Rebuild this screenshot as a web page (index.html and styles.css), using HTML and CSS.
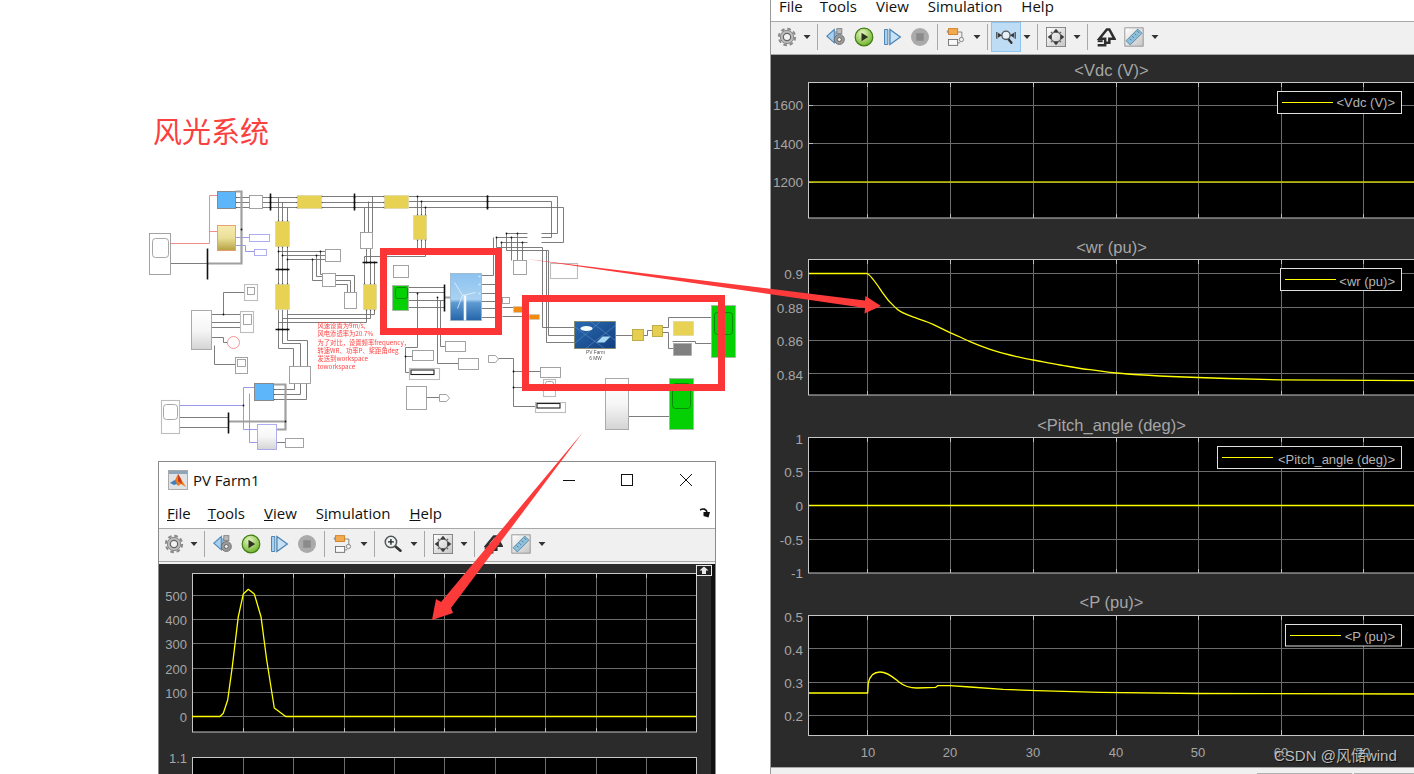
FILE: index.html
```html
<!DOCTYPE html>
<html lang="zh">
<head>
<meta charset="utf-8">
<title>风光系统</title>
<link rel="stylesheet" href="styles.css">
</head>
<body>
<svg class="defs" width="0" height="0" aria-hidden="true">
  <defs>
    <linearGradient id="gYellow" x1="0" y1="0" x2="0" y2="1"><stop offset="0" stop-color="#f6ecb0"/><stop offset=".5" stop-color="#eadf98"/><stop offset="1" stop-color="#b5a040"/></linearGradient>
    <linearGradient id="gGray" x1="0" y1="0" x2="0" y2="1"><stop offset="0" stop-color="#fff"/><stop offset=".5" stop-color="#f6f6f6"/><stop offset="1" stop-color="#d4d4d4"/></linearGradient>
    <linearGradient id="gSky" x1="0" y1="0" x2="0" y2="1"><stop offset="0" stop-color="#8cc2f0"/><stop offset=".55" stop-color="#a9d2f2"/><stop offset=".62" stop-color="#5f9bd2"/><stop offset="1" stop-color="#2464a8"/></linearGradient>
    <linearGradient id="gPv" x1="0" y1="0" x2="1" y2="1"><stop offset="0" stop-color="#2a6ab0"/><stop offset="1" stop-color="#123f80"/></linearGradient>
    <radialGradient id="gPlay" cx=".4" cy=".3" r=".8"><stop offset="0" stop-color="#e6f5c0"/><stop offset="1" stop-color="#62ab1c"/></radialGradient>
    <linearGradient id="gFit" x1="0" y1="0" x2="1" y2="1"><stop offset="0" stop-color="#fff"/><stop offset="1" stop-color="#c4c4c4"/></linearGradient>
    <symbol id="i-gear" viewBox="0 0 24 24"><circle cx="12" cy="12" r="9.8" fill="none" stroke="#8a8a8a" stroke-width="2.4" stroke-dasharray="4.400 3.300"/><circle cx="12" cy="12" r="8" fill="#bdbdbd" stroke="#777"/><circle cx="12" cy="12" r="4.400" fill="#f2f2f2" stroke="#666" stroke-width="1.500"/></symbol>
    <symbol id="i-back" viewBox="0 0 24 24"><path d="M1 11 10 3v16z" fill="#a9cfec" stroke="#4d86b6" stroke-width="1.3"/><path d="M12 5v13" stroke="#7aa8cc" stroke-width="2"/><circle cx="16" cy="15" r="6" fill="#9a9a9a" stroke="#666"/><circle cx="16" cy="15" r="2.4" fill="#eee" stroke="#555"/><rect x="13" y="2" width="6" height="6" fill="#bbb" stroke="#777"/></symbol>
    <symbol id="i-play" viewBox="0 0 24 24"><circle cx="12" cy="12" r="10.6" fill="url(#gPlay)" stroke="#3f7d12" stroke-width="1.4"/><path d="M9 7l8 5-8 5z" fill="#2c3320"/></symbol>
    <symbol id="i-step" viewBox="0 0 24 24"><path d="M3 3h4v18H3z" fill="#a9cfec" stroke="#4d86b6" stroke-width="1.2"/><path d="M9.5 3 22 12 9.500 21z" fill="#c8e1f4" stroke="#4d86b6" stroke-width="1.6"/></symbol>
    <symbol id="i-stop" viewBox="0 0 24 24"><circle cx="12" cy="12" r="10.800" fill="#aaa"/><rect x="7.500" y="7.500" width="9" height="9" fill="#8b8b8b"/></symbol>
    <symbol id="i-block" viewBox="0 0 24 24"><path d="M13 6h6v9h-2M13 19h4" fill="none" stroke="#777"/><rect x="3" y="2" width="11" height="7" fill="#f3a94d" stroke="#c9781b"/><rect x="1" y="4" width="2" height="3" fill="#999"/><rect x="3" y="15" width="11" height="7" fill="#f8f8f8" stroke="#666"/><circle cx="18.500" cy="15" r="2.600" fill="#eee" stroke="#777"/></symbol>
    <symbol id="i-zoom" viewBox="0 0 24 24"><path d="m14 14 7 6" stroke="#333" stroke-width="3.200" stroke-linecap="round"/><circle cx="9.500" cy="9.500" r="6.800" fill="#eef4f6" stroke="#555" stroke-width="1.800"/><path d="M6 9.500h7M9.500 6v7" stroke="#222" stroke-width="1.600"/></symbol>
    <symbol id="i-zoomx" viewBox="0 0 24 24"><path d="m14.500 14 4 5" stroke="#333" stroke-width="2.800" stroke-linecap="round"/><circle cx="12" cy="10" r="5" fill="#e5f0f7" stroke="#555" stroke-width="1.600"/><path d="M1 6v8M23 6v8" stroke="#333" stroke-width="1.400"/><path d="M7 10 2.500 7v6zM17 10l4.500-3v6z" fill="#333"/></symbol>
    <symbol id="i-fit" viewBox="0 0 24 24"><rect x=".5" y=".5" width="23" height="23" fill="url(#gFit)" stroke="#777"/><path d="M12 2l4 5H8zM12 22l4-5H8zM2 12l5-4v8zM22 12l-5-4v8z" fill="#3a3a3a"/><path d="m6 6 2.500 2.500M18 6l-2.500 2.500M6 18l2.500-2.500M18 18l-2.500-2.500" stroke="#666" stroke-width="1.800"/></symbol>
    <symbol id="i-cursor" viewBox="0 0 24 24"><path d="M2 22h9v-8H4l9-11h3l6 11h-6v5h-5" fill="none" stroke="#2e2e2e" stroke-width="3"/><path d="M2 17h6" stroke="#2e2e2e" stroke-width="2.400"/></symbol>
    <symbol id="i-ruler" viewBox="0 0 24 24"><rect x="1" y="1" width="22" height="22" fill="url(#gFit)" stroke="#8a8a8a"/><path d="M2.500 16.500 16.500 2.500l5 5-14 14z" fill="#8fc0dc" stroke="#4d7f9e"/><path d="m7 14 2 2M10 11l2 2M13 8l2 2M16 5l2 2" stroke="#3e6a86"/></symbol>
  </defs>
</svg>

<main class="desk">
  <h1 class="slide-title">风光系统</h1>

  <svg class="diagram" viewBox="139.500 179.500 620 280" width="620" height="280">
    <!-- wires -->
    <path class="wire" d="M235 197H297M235 202H297M235 207H297M321 196H384M321 202H384M321 207H384M408 196H557V233H541M408 201H551V237H541M408 207H563V242H541M278 197V221M282 202V221M287 207V221M278 246V284M282 246V284M287 246V284M278 309V329M282 309V329M287 309V329M417 196V215M421 201V215M425 207V215M417 239V249M421 239V249M425 239V256H364V284M364 207V232M368 201V232M372 196V232M366 248V262M370 248V262M374 262V284M370 262V284M278 251H325M282 255H325M287 259H325M312 259V280H322M316 255V276H322M320 251V274H322M335 275H354V292M335 280H350V292M335 284H347V292M287 314H374V309M282 318H370V309M278 322H366V309M278 329V348H293V366M282 329V343H300V366M287 329V340H307V366M273 389H294V383M273 394H300V383M273 399H306V383M211 314H240M211 322H240M211 327H240M223 314V292H244M211 337H223V342H227M214 345V364H235M170 263H207M179 417H228M179 427H228M408 287H444M408 292H444M408 300H444M408 307H444M417 293V347H405V372H409M405 356H412M437 297V363H458M440 300V346H445M426 397H439M498 358H513V406H535M513 371H540M513 387H543M481 275H493V237M527 233H506V250M527 237H496V247M527 242H501V247M496 247H542M506 250H548M511 237V260M517 233V260M522 242V260M542 247V327H574M548 250V335H574M546 250V342H574M481 284H495M481 293H495M481 301H495M481 308H495M481 317H495M495 300H509M502 307H513M502 316H529M615 335H632M643 335H647V330H652M662 327H668V317H711M662 332H668V348H673M672 341H695V343H711M628 416H669M276 442H285"/>
    <path class="wire-red" d="M170 243H209V195H217M209 231H217"/>
    <path class="wire-blue" d="M235 237H249M235 245H245V251H254M179 405H243V387H254M243 405V429H257M249 393V442H257"/>
    <path class="bus-gray" d="M444 297H450M207 263H241V191H235M228 421H285M273 384H285V429H276"/>
    <path class="bus" d="M207 248V279M228 412V433M444 284V311M270 193V210M354 193V210M487 195V209M275 269H289M275 329H289M362 262H377"/>
    <path class="dots" d="M270 197h0M270 202h0M270 207h0M354 197h0M354 202h0M354 207h0M487 196h0M487 201h0M487 207h0M278 269h0M282 269h0M287 269h0M278 329h0M282 329h0M287 329h0M366 262h0M370 262h0M374 262h0M241 229h0M417 196h0M421 201h0M425 207h0M417 293h0M437 297h0M405 356h0M513 371h0M513 387h0M506 233h0M517 233h0M511 237h0M496 237h0M522 242h0M501 242h0M223 314h0M243 405h0M285 421h0M312 259h0M316 255h0M320 251h0M278 251h0M282 255h0M287 259h0M235 197h0M235 202h0M235 207h0M297 197h0M297 202h0M297 207h0M321 196h0M321 202h0M321 207h0M384 196h0M384 202h0M384 207h0M278 221h0M282 221h0M287 221h0M278 246h0M282 246h0M287 246h0M278 284h0M282 284h0M287 284h0M364 284h0M370 284h0M374 284h0M366 309h0M370 309h0M374 309h0M417 215h0M421 215h0M425 215h0M417 239h0M421 239h0M425 239h0M273 389h0M273 394h0M273 399h0"/>

    <!-- blocks -->
    <rect class="b-blue" x="217" y="191" width="18" height="17"/>
    <rect class="b-gold" x="217" y="225" width="18" height="25"/>
    <rect class="b" x="149" y="233" width="21" height="41"/><rect class="b-in" x="152" y="238" width="16" height="19" rx="3"/>
    <rect class="b" x="249" y="195" width="13" height="13"/>
    <rect class="b-y" x="297" y="195" width="24" height="13"/>
    <rect class="b-y" x="384" y="195" width="24" height="13"/>
    <rect class="b-y" x="275" y="221" width="14" height="25"/>
    <rect class="b-y" x="413" y="215" width="13" height="24"/>
    <rect class="b-y" x="275" y="284" width="14" height="25"/>
    <rect class="b-y" x="363" y="284" width="13" height="25"/>
    <rect class="b-outline" x="249" y="234" width="20" height="7"/>
    <rect class="b-outline" x="254" y="249" width="12" height="6"/>
    <rect class="b" x="360" y="232" width="12" height="16"/>
    <rect class="b" x="325" y="249" width="15" height="12"/>
    <rect class="b" x="322" y="273" width="13" height="13"/>
    <rect class="b" x="344" y="292" width="12" height="16"/>
    <rect class="b-soft" x="244" y="284" width="13" height="16"/><rect class="b-in" x="247" y="287" width="7" height="7"/>
    <rect class="b-grad" x="191" y="310" width="20" height="39"/>
    <rect class="b-soft" x="240" y="311" width="13" height="21"/><rect class="b-in" x="243" y="314" width="8" height="10"/>
    <circle class="b-ring" cx="233" cy="342" r="6"/>
    <rect class="b" x="235" y="357" width="12" height="16"/><rect class="b-in" x="237" y="359" width="8" height="7"/>
    <rect class="b" x="289" y="366" width="21" height="17"/>
    <rect class="b-blue" x="254" y="383" width="19" height="17"/>
    <rect class="b-soft" x="161" y="400" width="18" height="33"/><rect class="b-in" x="163" y="404" width="14" height="15" rx="3"/>
    <rect class="b-grad-blue" x="257" y="424" width="19" height="25"/>
    <rect class="b" x="285" y="438" width="18" height="9"/>

    <rect class="b" x="393" y="265" width="15" height="12"/>
    <rect class="b-green" x="392" y="285" width="16" height="25"/><rect class="b-in-green" x="395" y="287" width="12" height="11" rx="2"/>
    <rect class="b-sky" x="450" y="273" width="31" height="47"/>
    <path class="blade" d="M462 295 454 282M462 295 475 292M462 295 457 308"/>
    <path class="tower" d="M464.500 295V320"/>
    <path class="port" d="M478 276h2M478 284h2M478 293h2"/>
    <rect class="b" x="502" y="297" width="7" height="6"/>
    <rect class="b" x="513" y="260" width="13" height="14"/>
    <rect class="b-soft" x="550" y="263" width="27" height="15"/>
    <rect class="b-orange" x="513" y="306" width="10" height="6"/>
    <rect class="b-orange" x="529" y="314" width="10" height="5"/>
    <rect class="b" x="445" y="341" width="20" height="10"/>
    <rect class="b" x="458" y="358" width="20" height="11"/>
    <rect class="b" x="412" y="350" width="21" height="10"/>
    <rect class="b-soft" x="409" y="368" width="30" height="11"/><rect class="b-scope" x="410.500" y="369.500" width="23" height="4.500"/>
    <rect class="b" x="406" y="386" width="20" height="23"/>
    <path class="b" d="M439 394h7l3 3.500-3 3.500h-7z"/>
    <path class="b" d="M488 355h7l3 3.500-3 3.500h-7z"/>
    <rect class="b" x="540" y="367" width="20" height="10"/>
    <rect class="b-soft" x="543" y="379" width="12" height="17"/><rect class="b-in" x="545" y="381" width="8" height="7" rx="2"/>
    <rect class="b-soft" x="535" y="402" width="30" height="10"/><rect class="b-scope" x="536.500" y="403" width="23" height="4.500"/>
    <rect class="b-pv" x="574" y="321" width="41" height="27"/>
    <path class="pv-lines" d="M574 343 600 321M585 348 615 325M590 321 615 340M574 326 604 348"/>
    <ellipse class="pv-sun" cx="586" cy="328" rx="6" ry="2.500"/>
    <path class="pv-panel" d="M596 342 602 336H610L604 342z"/>
    <text class="pv-label" x="595" y="353">PV Farm</text>
    <text class="pv-label" x="595" y="359">6 MW</text>
    <rect class="b-y2" x="632" y="329" width="11" height="11"/>
    <rect class="b-y2" x="652" y="325" width="10" height="11"/>
    <rect class="b-y" x="673" y="321" width="20" height="14"/>
    <rect class="b-dark" x="673" y="343" width="18" height="12"/>
    <rect class="b-green" x="711" y="305" width="24" height="52"/><rect class="b-in-green" x="714" y="312" width="18" height="22" rx="3"/>
    <rect class="b-grad" x="605" y="378" width="23" height="51"/>
    <rect class="b-green" x="669" y="378" width="24" height="51"/><rect class="b-in-green" x="672" y="383" width="18" height="25" rx="3"/>

    <text class="note" x="317" y="327">风速设置为9m/s,</text>
    <text class="note" x="317" y="335">风电渗透率为20.7%</text>
    <text class="note" x="317" y="344">为了对比，设置频率frequency，</text>
    <text class="note" x="317" y="352">转速WR、功率P、桨距角deg</text>
    <text class="note" x="317" y="360">发送到workspace</text>
    <text class="note" x="317" y="368">toworkspace</text>
  </svg>

  <div class="callout callout-wind"></div>
  <div class="callout callout-pv"></div>

  <section class="window farm-win">
    <header class="titlebar">
      <svg class="app-icon" viewBox="0 0 20 20" width="20" height="20"><rect x=".5" y=".5" width="19" height="19" fill="#dfe3e6" stroke="#aaa"/><rect x="1" y="1" width="18" height="3" fill="#8ea4b8"/><path d="M2 13 7 10 10 4l3 5 5 8-5-3-3 2-3-4z" fill="#ee7c1e"/><path d="M2 13 7 10l2 4-3 1z" fill="#3f7fc0"/><path d="M10 4l3 5 1 5-4-3z" fill="#c8391c"/></svg>
      <span class="win-title">PV Farm1</span>
      <div class="win-buttons">
        <svg class="win-btn" viewBox="0 0 12 12" width="12" height="12"><path d="M0 6.500h12"/></svg>
        <svg class="win-btn" viewBox="0 0 12 12" width="12" height="12"><rect x=".5" y=".5" width="11" height="11"/></svg>
        <svg class="win-btn win-close" viewBox="0 0 12 12" width="12" height="12"><path d="m0 0 12 12M12 0 0 12"/></svg>
      </div>
    </header>
    <nav class="menubar">
      <span class="menu-first"><u>F</u>ile</span><span><u>T</u>ools</span><span><u>V</u>iew</span><span>S<u>i</u>mulation</span><span><u>H</u>elp</span>
      <svg class="dock" viewBox="0 0 10 10" width="10" height="10"><path d="M0 2C3 0 6 1 7 4" fill="none" stroke="#111" stroke-width="1.600"/><path d="M3.500 4H10L8.500 9.500 3.500 8z" fill="#111"/></svg>
    </nav>
    <div class="toolbar">
      <svg class="tool"><use href="#i-gear" x="5" y="4" width="20" height="20"/></svg><i class="caret"></i><i class="sep"></i>
      <svg class="tool"><use href="#i-back" x="4" y="4" width="20" height="20"/></svg>
      <svg class="tool"><use href="#i-play" x="4" y="4" width="20" height="20"/></svg>
      <svg class="tool"><use href="#i-step" x="4" y="4" width="20" height="20"/></svg>
      <svg class="tool"><use href="#i-stop" x="4" y="4" width="20" height="20"/></svg><i class="sep"></i>
      <svg class="tool"><use href="#i-block" x="4" y="4" width="20" height="20"/></svg><i class="caret"></i><i class="sep"></i>
      <svg class="tool"><use href="#i-zoom" x="4" y="4" width="20" height="20"/></svg><i class="caret"></i><i class="sep"></i>
      <svg class="tool"><use href="#i-fit" x="4" y="4" width="20" height="20"/></svg><i class="caret"></i><i class="sep"></i>
      <svg class="tool"><use href="#i-cursor" x="4" y="4" width="20" height="20"/></svg>
      <svg class="tool"><use href="#i-ruler" x="4" y="4" width="20" height="20"/></svg><i class="caret"></i>
    </div>
    <div class="scope-body">
      <svg class="plot" viewBox="159 564 556 210" width="556" height="210">
        <rect class="well" x="711" y="564" width="4" height="210"/>
        <rect class="axes" x="192.500" y="573.500" width="504" height="158.500"/>
        <path class="grid" d="M243.500 574V732M293.500 574V732M344.500 574V732M394.500 574V732M444.500 574V732M495.500 574V732M545.500 574V732M596.500 574V732M646.500 574V732M193 595.500H696M193 619.500H696M193 643.500H696M193 668.500H696M193 692.500H696M193 716.500H696"/>
        <path class="tick" d="M243.500 574v4M293.500 574v4M344.500 574v4M394.500 574v4M444.500 574v4M495.500 574v4M545.500 574v4M596.500 574v4M646.500 574v4M243.500 732v-4M293.500 732v-4M344.500 732v-4M394.500 732v-4M444.500 732v-4M495.500 732v-4M545.500 732v-4M596.500 732v-4M646.500 732v-4"/>
        <path class="trace" d="M192 716.500H220L223.300 713.300 227.700 700 232.300 666.700 238.300 616.700 243.300 594 248.300 589.300 254.300 594 261 616.700 266.700 660 274.300 708 285.700 716.500H696"/>
        <g class="ylabels-sm">
          <text x="187" y="601">500</text><text x="187" y="625">400</text><text x="187" y="649">300</text><text x="187" y="674">200</text><text x="187" y="698">100</text><text x="187" y="722">0</text><text x="187" y="763">1.1</text>
        </g>
        <rect class="axes" x="192.500" y="757.500" width="504" height="40"/>
        <path class="grid" d="M243.500 758V774M293.500 758V774M344.500 758V774M394.500 758V774M444.500 758V774M495.500 758V774M545.500 758V774M596.500 758V774M646.500 758V774"/>
        <rect class="restore" x="696.500" y="565.500" width="15" height="10"/>
        <path class="restore-arrow" d="M704 566.500l4.500 4h-2.500v3.500h-4v-3.500h-2.500z"/>
      </svg>
    </div>
  </section>

  <section class="window scope-win">
    <nav class="menubar menubar-cut">
      <span class="menu-first">File</span><span>Tools</span><span>View</span><span>Simulation</span><span>Help</span>
    </nav>
    <div class="toolbar">
      <svg class="tool"><use href="#i-gear" x="5" y="4" width="20" height="20"/></svg><i class="caret"></i><i class="sep"></i>
      <svg class="tool"><use href="#i-back" x="4" y="4" width="20" height="20"/></svg>
      <svg class="tool"><use href="#i-play" x="4" y="4" width="20" height="20"/></svg>
      <svg class="tool"><use href="#i-step" x="4" y="4" width="20" height="20"/></svg>
      <svg class="tool"><use href="#i-stop" x="4" y="4" width="20" height="20"/></svg><i class="sep"></i>
      <svg class="tool"><use href="#i-block" x="4" y="4" width="20" height="20"/></svg><i class="caret"></i><i class="sep"></i>
      <svg class="tool tool-active"><use href="#i-zoomx" x="4" y="4" width="20" height="20"/></svg><i class="caret"></i><i class="sep"></i>
      <svg class="tool"><use href="#i-fit" x="4" y="4" width="20" height="20"/></svg><i class="caret"></i><i class="sep"></i>
      <svg class="tool"><use href="#i-cursor" x="4" y="4" width="20" height="20"/></svg>
      <svg class="tool"><use href="#i-ruler" x="4" y="4" width="20" height="20"/></svg><i class="caret"></i>
    </div>
    <div class="scope-body scope-stack">
      <svg class="plot" viewBox="771 55 643 178" width="643" height="178">
        <text class="plot-title" x="1111.500" y="76">&lt;Vdc (V)&gt;</text>
        <rect class="axes" x="808.500" y="82.500" width="620" height="135.500"/>
        <path class="grid" d="M867.500 83V218M950.500 83V218M1033.500 83V218M1116.500 83V218M1198.500 83V218M1281.500 83V218M1363.500 83V218M809 105.500H1414M809 143.500H1414M809 182.500H1414"/>
        <path class="tick" d="M867.500 83v4M950.500 83v4M1033.500 83v4M1116.500 83v4M1198.500 83v4M1281.500 83v4M1363.500 83v4M867.500 218v-4M950.500 218v-4M1033.500 218v-4M1116.500 218v-4M1198.500 218v-4M1281.500 218v-4M1363.500 218v-4M809 105.500h4M809 143.500h4M809 182.500h4"/>
        <path class="trace trace-dim" d="M809 182H1414"/>
        <g class="ylabels"><text x="803" y="110">1600</text><text x="803" y="149">1400</text><text x="803" y="187">1200</text></g>
        <rect class="legend" x="1277.500" y="91.500" width="124" height="22"/>
        <path class="legend-line" d="M1282 102.500H1333"/>
        <text class="legend-text" x="1395" y="107">&lt;Vdc (V)&gt;</text>
      </svg>
      <svg class="plot" viewBox="771 233 643 177" width="643" height="177">
        <text class="plot-title" x="1111.500" y="253">&lt;wr (pu)&gt;</text>
        <rect class="axes" x="808.500" y="259.500" width="620" height="135.500"/>
        <path class="grid" d="M867.500 260V395M950.500 260V395M1033.500 260V395M1116.500 260V395M1198.500 260V395M1281.500 260V395M1363.500 260V395M809 273.500H1414M809 307.500H1414M809 340.500H1414M809 373.500H1414"/>
        <path class="tick" d="M867.500 260v4M950.500 260v4M1033.500 260v4M1116.500 260v4M1198.500 260v4M1281.500 260v4M1363.500 260v4M867.500 395v-4M950.500 395v-4M1033.500 395v-4M1116.500 395v-4M1198.500 395v-4M1281.500 395v-4M1363.500 395v-4"/>
        <path class="trace" d="M809 273.500H867C871 275 876 283 883 293.300S893 305 897 309 908 315 917 318.300 926 321 933 324.300L950 332.700C958 336 964 339 970 341.700S983 347 990 349.300 1003 353.400 1010 355 1025 358.600 1033 360 1050 363.400 1060 365 1078 368.300 1090 369.700 1106 372 1116 373 1170 376.500 1198 377.500 1250 379.200 1281 379.800L1414 380.700"/>
        <g class="ylabels"><text x="803" y="279">0.9</text><text x="803" y="313">0.88</text><text x="803" y="346">0.86</text><text x="803" y="380">0.84</text></g>
        <rect class="legend" x="1280.500" y="268.500" width="121" height="22"/>
        <path class="legend-line" d="M1285 279.500H1336"/>
        <text class="legend-text" x="1395" y="286">&lt;wr (pu)&gt;</text>
      </svg>
      <svg class="plot" viewBox="771 410 643 178" width="643" height="178">
        <text class="plot-title" x="1111.500" y="431">&lt;Pitch_angle (deg)&gt;</text>
        <rect class="axes" x="808.500" y="437.500" width="620" height="135.500"/>
        <path class="grid" d="M867.500 438V573M950.500 438V573M1033.500 438V573M1116.500 438V573M1198.500 438V573M1281.500 438V573M1363.500 438V573M809 471.500H1414M809 539.500H1414"/>
        <path class="tick" d="M867.500 438v4M950.500 438v4M1033.500 438v4M1116.500 438v4M1198.500 438v4M1281.500 438v4M1363.500 438v4M867.500 573v-4M950.500 573v-4M1033.500 573v-4M1116.500 573v-4M1198.500 573v-4M1281.500 573v-4M1363.500 573v-4"/>
        <path class="trace" d="M809 505.500H1414"/>
        <g class="ylabels"><text x="803" y="444">1</text><text x="803" y="477">0.5</text><text x="803" y="511">0</text><text x="803" y="545">-0.5</text><text x="803" y="578">-1</text></g>
        <rect class="legend" x="1217.500" y="446.500" width="184" height="22"/>
        <path class="legend-line" d="M1222 457.500H1273"/>
        <text class="legend-text" x="1395" y="464">&lt;Pitch_angle (deg)&gt;</text>
      </svg>
      <svg class="plot" viewBox="771 588 643 179" width="643" height="179">
        <text class="plot-title" x="1111.500" y="608">&lt;P (pu)&gt;</text>
        <rect class="axes" x="808.500" y="615.500" width="620" height="120"/>
        <path class="grid" d="M867.500 616V735M950.500 616V735M1033.500 616V735M1116.500 616V735M1198.500 616V735M1281.500 616V735M1363.500 616V735M809 648.500H1414M809 682.500H1414M809 715.500H1414"/>
        <path class="tick" d="M867.500 616v4M950.500 616v4M1033.500 616v4M1116.500 616v4M1198.500 616v4M1281.500 616v4M1363.500 616v4M867.500 735v-5M950.500 735v-5M1033.500 735v-5M1116.500 735v-5M1198.500 735v-5M1281.500 735v-5M1363.500 735v-5"/>
        <path class="trace" d="M809 693H867.700L868.300 683C870 675 875 672 880 672 888 672 894 678 899 682 905 687 910 688 917 688L935.700 687.300 937.700 685.700 950 685.700 970 687 1003 689.300 1036.700 690.700 1100 692.300 1198 693.500 1414 694"/>
        <g class="ylabels"><text x="803" y="622">0.5</text><text x="803" y="655">0.4</text><text x="803" y="688">0.3</text><text x="803" y="721">0.2</text></g>
        <g class="xlabels"><text x="868" y="757">10</text><text x="950" y="757">20</text><text x="1033" y="757">30</text><text x="1116" y="757">40</text><text x="1198" y="757">50</text><text x="1281" y="757">60</text><text x="1363" y="757">70</text></g>
        <rect class="legend" x="1285.500" y="624.500" width="116" height="21.500"/>
        <path class="legend-line" d="M1290 635.500H1341"/>
        <text class="legend-text" x="1395" y="641">&lt;P (pu)&gt;</text>
      </svg>
    </div>
    <footer class="statusbar"><span class="status-cell"></span><span class="status-cell status-end"></span></footer>
  </section>

  <svg class="arrows" viewBox="0 0 1414 774" width="1414" height="774">
    <path d="M527 259 865 300.500 865.500 296 881 306 864.500 313.500 865 308z"/>
    <path d="M583 432 451 608 453 613 432 620 436 599 441 602z"/>
  </svg>

  <div class="watermark">CSDN @风储wind</div>
</main>
</body>
</html>
```

FILE: styles.css
```css
html, body {
  margin: 0;
  padding: 0;
  height: 100%;
  overflow: hidden;
  background: #fff;
}

.defs {
  position: absolute;
}

.desk {
  position: relative;
  width: 1414px;
  height: 774px;
  overflow: hidden;
  background: #fff;
  font-family: "Liberation Sans", "Noto Sans CJK SC", sans-serif;
}

.slide-title {
  position: absolute;
  left: 153px;
  top: 113px;
  margin: 0;
  font: 400 29px/34px "Noto Sans CJK SC", sans-serif;
  color: #fb4040;
}

/* Simulink canvas */
.diagram {
  position: absolute;
  left: 140px;
  top: 180px;
  filter: blur(.2px);
}
.wire { fill: none; stroke: #6e6e6e; stroke-width: .9; }
.wire-red { fill: none; stroke: #f08080; stroke-width: .9; }
.wire-blue { fill: none; stroke: #8e8ee8; stroke-width: .9; }
.bus-gray { fill: none; stroke: #a0a0a0; stroke-width: 2.2; }
.bus { fill: none; stroke: #111; stroke-width: 1.6; }
.dots { fill: none; stroke: #111; stroke-width: 1.8; stroke-linecap: round; }
.b { fill: #fff; stroke: #999; stroke-width: .9; }
.b-soft { fill: #fff; stroke: #bdbdbd; stroke-width: 1.1; }
.b-in { fill: none; stroke: #909090; stroke-width: .8; }
.b-blue { fill: #5eb6fa; stroke: #8a8a8a; stroke-width: 1; }
.b-gold { fill: url(#gYellow); stroke: #e89a6a; stroke-width: .9; }
.b-y { fill: #e8d254; stroke: #dcd6a8; stroke-width: .7; }
.b-y2 { fill: #e6cf50; stroke: #b8a840; stroke-width: .9; }
.b-outline { fill: #fff; stroke: #a5a5ee; stroke-width: .9; }
.b-grad { fill: url(#gGray); stroke: #aaa; stroke-width: 1; }
.b-grad-blue { fill: url(#gGray); stroke: #a5a5ee; stroke-width: .9; }
.b-ring { fill: #fff; stroke: #f08a8a; stroke-width: .9; }
.b-green { fill: #04d004; stroke: #a8b8a8; stroke-width: .9; }
.b-in-green { fill: none; stroke: #0a7a0a; stroke-width: .8; }
.b-sky { fill: url(#gSky); stroke: #9ab2c8; stroke-width: .8; }
.blade { fill: none; stroke: #e8f0f6; stroke-width: .8; }
.tower { fill: none; stroke: #f4f8fb; stroke-width: 2.6; }
.port { fill: none; stroke: #d8e8f4; stroke-width: 1.6; }
.b-orange { fill: #f28a10; stroke: #c8c8c8; stroke-width: .6; }
.b-scope { fill: #fff; stroke: #222; stroke-width: 1.1; }
.b-pv { fill: url(#gPv); stroke: #8a8460; stroke-width: .8; }
.pv-lines { fill: none; stroke: #7aa8d8; stroke-width: .4; }
.pv-sun { fill: #f4fbff; }
.pv-panel { fill: #a8d8f4; }
.b-dark { fill: #808080; stroke: #aaa; stroke-width: .7; }
.pv-label {
  font: 4.800px "Liberation Sans", sans-serif;
  fill: #555;
  text-anchor: middle;
}
.note {
  font: 6.300px "Noto Sans CJK SC", "Liberation Serif", serif;
  fill: #f44;
}

.callout {
  position: absolute;
  box-sizing: border-box;
  border: 7px solid #fc3636;
}
.callout-wind { left: 380px; top: 248px; width: 122px; height: 87px; }
.callout-pv { left: 522px; top: 295px; width: 203px; height: 96px; }

/* Figure windows */
.window {
  position: absolute;
  box-sizing: border-box;
  display: flex;
  flex-direction: column;
  overflow: hidden;
  background: #fff;
  font-family: "Open Sans", "Noto Sans", sans-serif;
  color: #111;
}
.farm-win {
  left: 158px;
  top: 461px;
  width: 558px;
  height: 313px;
  border: 1px solid #8a8a8a;
  border-bottom: 0;
}
.scope-win {
  left: 770px;
  top: 0;
  width: 644px;
  height: 774px;
  border-left: 1px solid #9a9a9a;
}

.titlebar {
  display: flex;
  align-items: center;
  height: 36px;
  padding-left: 9px;
  flex: none;
}
.app-icon { flex: none; }
.win-title {
  margin-left: 5px;
  font-size: 15px;
}
.win-buttons {
  display: flex;
  margin-left: auto;
}
.win-btn {
  box-sizing: content-box;
  padding: 0 23px;
  fill: none;
  stroke: #111;
  stroke-width: 1;
}
.win-close { margin-left: 1px; }

.menubar {
  display: flex;
  align-items: flex-end;
  gap: 19px;
  flex: none;
  box-sizing: border-box;
  height: 31px;
  padding: 0 5px 5px 8px;
  font-size: 15px;
  line-height: 20px;
  border-bottom: 1px solid #a8a8a8;
}
.menu-first { margin-right: -2px; }
.menubar-cut { height: 22px; }
.dock { margin-left: auto; margin-bottom: 5px; }

.toolbar {
  display: flex;
  align-items: center;
  flex: none;
  box-sizing: border-box;
  height: 33px;
  padding-bottom: 2px;
  background: #f0f0f0;
  border-bottom: 1px solid #a8a8a8;
}
.scope-win .toolbar { padding-left: 1px; }
.tool {
  display: block;
  flex: none;
  width: 28px;
  height: 28px;
}
.tool-active {
  background: #bfdcf5;
  outline: 1px solid #8cc6f0;
}
.caret {
  flex: none;
  width: 14px;
  height: 4px;
  background: #333;
  clip-path: polygon(25% 0, 75% 0, 50% 100%);
}
.sep {
  flex: none;
  width: 1px;
  height: 26px;
  margin: 0 4px 0 3px;
  background: #a8a8a8;
}

.scope-body {
  flex: 1;
  min-height: 0;
  background: #2b2b2b;
  border-top: 2px solid #f0f0f0;
}
.scope-stack {
  display: flex;
  flex-direction: column;
  flex: none;
  height: 712px;
  border-top: 0;
}
.plot {
  display: block;
  flex: none;
}
.well { fill: #111; }
.axes { fill: #000; stroke: #c6c6c6; stroke-width: 1; }
.grid { fill: none; stroke: #6c6c6c; stroke-width: 1; }
.tick { fill: none; stroke: #bdbdbd; stroke-width: 1; }
.trace { fill: none; stroke: #ffff00; stroke-width: 1.300; stroke-linejoin: round; }
.trace-dim { stroke: #c8c800; stroke-width: 1.600; }
.plot-title {
  font: 16.500px "Liberation Sans", sans-serif;
  fill: #a6a6a6;
  text-anchor: middle;
}
.ylabels, .ylabels-sm {
  font: 13.500px "Liberation Sans", sans-serif;
  fill: #a6a6a6;
  text-anchor: end;
}
.ylabels-sm { font-size: 13px; }
.xlabels {
  font: 13px "Liberation Sans", sans-serif;
  fill: #a6a6a6;
  text-anchor: middle;
}
.legend { fill: #000; stroke: #e0e0e0; stroke-width: 1; }
.legend-line { fill: none; stroke: #ffff00; stroke-width: 1; }
.legend-text {
  font: 13px "Liberation Sans", sans-serif;
  fill: #b4b4b4;
  text-anchor: end;
}
.restore { fill: #222; stroke: #e8e8e8; stroke-width: 1; }
.restore-arrow { fill: #e8e8e8; }

.statusbar {
  display: flex;
  justify-content: flex-end;
  gap: 2px;
  flex: none;
  box-sizing: border-box;
  height: 7px;
  padding-top: 5px;
  background: #f0f0f0;
  border-top: 1px solid #a8a8a8;
}
.status-cell {
  width: 95px;
  border-top: 1px solid #b0b0b0;
}
.status-end { width: 60px; }

.arrows {
  position: absolute;
  left: 0;
  top: 0;
  fill: #fc3a3a;
  pointer-events: none;
}

.watermark {
  position: absolute;
  left: 1274px;
  top: 746px;
  font: 15px/20px "Liberation Sans", "Noto Sans CJK SC", sans-serif;
  color: #bdbdbd;
  text-shadow: 1px 1px 1px rgba(0, 0, 0, .7);
}
```
